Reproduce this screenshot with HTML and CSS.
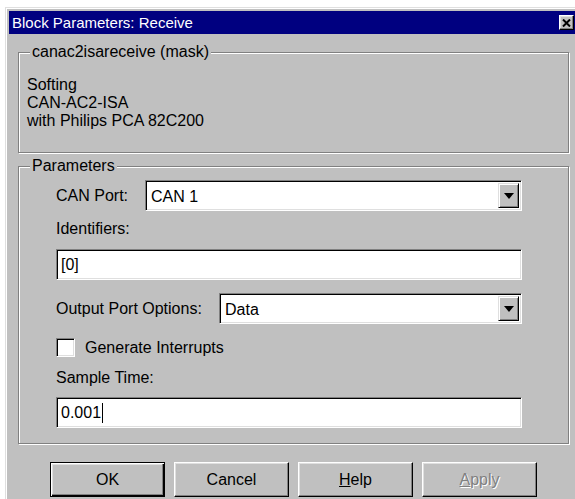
FILE: index.html
```html
<!DOCTYPE html>
<html lang="en">
<head>
<meta charset="utf-8">
<title>Block Parameters: Receive</title>
<link rel="stylesheet" href="styles.css">
</head>
<body>
<div class="window">
  <div class="titlebar">
    <span class="title">Block Parameters: Receive</span>
    <span class="close" role="button" aria-label="Close">
      <svg width="9" height="8" viewBox="0 0 9 8"><path d="M1 0.5 L8 7.5 M8 0.5 L1 7.5" stroke="#000" stroke-width="2" fill="none"/></svg>
    </span>
  </div>
  <div class="client">
    <div class="group group-mask">
      <div class="group-title">canac2isareceive (mask)</div>
      <div class="desc">Softing<br>CAN-AC2-ISA<br>with Philips PCA 82C200</div>
    </div>

    <div class="group group-params">
      <div class="group-title">Parameters</div>

      <div class="row row-port">
        <span class="row-label">CAN Port:</span>
        <div class="combo combo-port">
          <span class="combo-text">CAN 1</span>
          <span class="drop"><span class="arrow"></span></span>
        </div>
      </div>

      <div class="field-label label-ident">Identifiers:</div>
      <div class="edit edit-ident">[0]</div>

      <div class="row row-output">
        <span class="row-label">Output Port Options:</span>
        <div class="combo combo-output">
          <span class="combo-text">Data</span>
          <span class="drop"><span class="arrow"></span></span>
        </div>
      </div>

      <div class="check-row">
        <span class="checkbox"></span>
        <span class="check-label">Generate Interrupts</span>
      </div>

      <div class="field-label label-time">Sample Time:</div>
      <div class="edit edit-time">0.001<span class="caret"></span></div>
    </div>

    <div class="buttons">
      <div class="btn btn-default">OK</div>
      <div class="btn">Cancel</div>
      <div class="btn"><u>H</u>elp</div>
      <div class="btn btn-disabled"><u>A</u>pply</div>
    </div>
  </div>
</div>
</body>
</html>
```

FILE: styles.css
```css
html, body {
  margin: 0;
  height: 100%;
  overflow: hidden;
  background: #fff;
}

body {
  font-family: "Liberation Sans", Arial, sans-serif;
  font-size: 16px;
  color: #000;
}

/* dialog frame */
.window {
  box-sizing: border-box;
  width: 574px;
  height: 492px;
  margin: 7px 0 0 5px;
  padding: 3px 3px 0 3px;
  background: #c0c0c0;
  border-top: 1px solid #dfdfdf;
  border-left: 1px solid #dfdfdf;
  box-shadow: inset 1px 1px #fff;
}

.titlebar {
  height: 23px;
  display: flex;
  align-items: center;
  justify-content: space-between;
  padding: 0 2px 0 3px;
  background: #000080;
  color: #fff;
  font-size: 15px;
}

.close {
  box-sizing: border-box;
  width: 15px;
  height: 15px;
  display: flex;
  align-items: center;
  justify-content: center;
  background: #c0c0c0;
  border: 1px solid;
  border-color: #fff #000 #000 #fff;
  box-shadow: inset -1px -1px #808080, inset 1px 1px #dfdfdf;
}

.close svg {
  display: block;
}

.client {
  padding: 18px 7px 0 9px;
}

/* etched group boxes */
.group {
  border: 1px solid #808080;
  box-shadow: inset 1px 1px #fff, 1px 1px #fff;
}

.group-title {
  display: table;
  margin: -10px 0 0 3px;
  padding: 0 2px;
  line-height: 18px;
  background: #c0c0c0;
}

.group-mask {
  padding: 0 8px 22px 8px;
}

.desc {
  margin-top: 15px;
  line-height: 18px;
}

.group-params {
  margin-top: 13px;
  padding: 0 46px 15px 37px;
}

.group-params .group-title {
  margin-left: -26px;
}

.row {
  display: flex;
  align-items: center;
  height: 31px;
}

.row-label {
  flex: 1;
  line-height: 18px;
}

.row-port {
  margin-top: 5px;
}

.row-output {
  margin-top: 13px;
}

.combo-port {
  flex: 0 0 377px;
}

.combo-output {
  flex: 0 0 303px;
}

/* sunken white fields */
.combo,
.edit,
.checkbox {
  box-sizing: border-box;
  background: #fff;
  border: 1px solid;
  border-color: #808080 #fff #fff #808080;
  box-shadow: inset 1px 1px #000, inset -1px -1px #dfdfdf;
}

.combo {
  height: 31px;
  display: flex;
  align-items: stretch;
  padding: 2px;
}

.combo-text {
  flex: 1;
  padding-left: 3px;
  line-height: 27px;
}

.drop {
  box-sizing: border-box;
  width: 21px;
  display: flex;
  align-items: center;
  justify-content: center;
  background: #c0c0c0;
  border: 1px solid;
  border-color: #dfdfdf #000 #000 #dfdfdf;
  box-shadow: inset 1px 1px #fff, inset -1px -1px #808080;
}

.arrow {
  width: 0;
  height: 0;
  border-left: 5px solid transparent;
  border-right: 5px solid transparent;
  border-top: 6px solid #000;
}

.field-label {
  line-height: 18px;
}

.label-ident {
  margin-top: 9px;
}

.label-time {
  margin-top: 12px;
}

.edit {
  height: 31px;
  display: flex;
  align-items: center;
  padding: 0 4px;
}

.edit-ident {
  margin-top: 11px;
}

.edit-time {
  margin-top: 10px;
}

.caret {
  display: inline-block;
  width: 1px;
  height: 20px;
  margin-left: 1px;
  background: #000;
}

.check-row {
  display: flex;
  align-items: center;
  height: 19px;
  margin-top: 14px;
}

.checkbox {
  width: 19px;
  height: 19px;
  flex: none;
}

.check-label {
  margin-left: 10px;
  line-height: 18px;
}

/* push buttons */
.buttons {
  display: flex;
  gap: 9px;
  margin: 18px 0 0 32px;
}

.btn {
  box-sizing: border-box;
  width: 115px;
  height: 35px;
  display: flex;
  align-items: center;
  justify-content: center;
  background: #c0c0c0;
  border: 1px solid;
  border-color: #fff #000 #000 #fff;
  box-shadow: inset -1px -1px #808080, inset 1px 1px #dfdfdf;
}

.btn-default {
  border: 1px solid #000;
  box-shadow: inset 1px 1px #fff, inset -1px -1px #000, inset -2px -2px #808080, inset 2px 2px #dfdfdf;
}

.btn-disabled {
  color: #808080;
  text-shadow: 1px 1px #fff;
}
```
